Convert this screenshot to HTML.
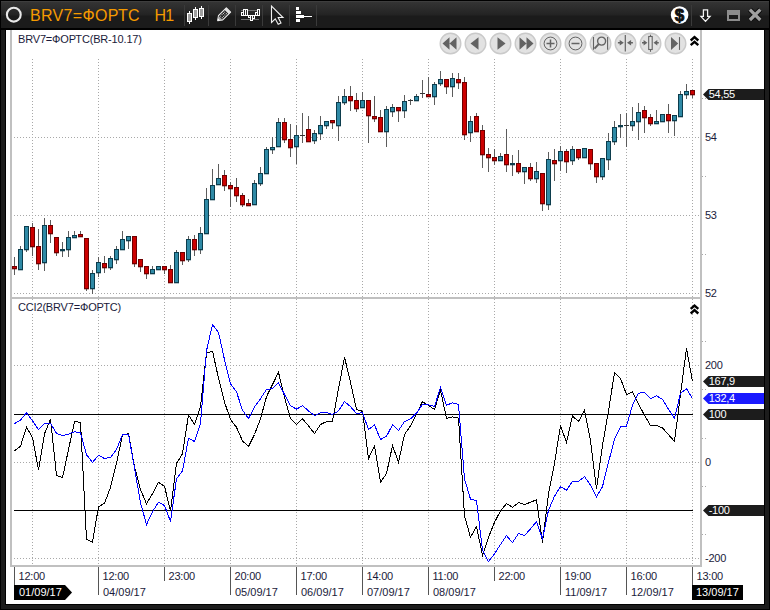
<!DOCTYPE html>
<html lang="ru"><head><meta charset="utf-8"><title>BRV7=ФОРТС H1</title>
<style>
html,body{margin:0;padding:0;background:#1c1c1c;}
body{width:770px;height:610px;position:relative;overflow:hidden;font-family:"Liberation Sans", Arial, sans-serif;}
#win{position:absolute;left:0;top:0;width:770px;height:610px;background:#1c1c1c;box-sizing:border-box;border:1px solid #000;}
#title{position:absolute;left:0;top:0;width:770px;height:30px;background:linear-gradient(to bottom,#000 0,#000 1px,#3e3e3e 1px,#3e3e3e 2px,#343434 2px,#232323 15px,#1b1b1b 16px,#1b1b1b 28.5px,#000 28.5px,#000 30px);}
#title .t{position:absolute;top:3.9px;height:24px;line-height:24px;color:#f59a00;font-size:16px;letter-spacing:0.32px;white-space:nowrap;}
#paper{position:absolute;left:5px;top:29px;width:758px;height:574px;background:#fff;border:1px solid #000;}
.l{position:absolute;white-space:nowrap;line-height:13px;height:13px;font-size:11px;}
</style></head><body>
<div id="win"></div>
<div id="paper"></div>
<div id="title"><div class="t" style="left:30px">BRV7=ФОРТС</div><div class="t" style="left:154.6px;letter-spacing:-1px">H1</div>
<svg width="770" height="30" viewBox="0 0 770 30" style="position:absolute;left:0;top:0">
<rect x="0" y="0" width="1" height="30" fill="#000"/><rect x="769" y="0" width="1" height="30" fill="#000"/>
<circle cx="13.8" cy="14.7" r="6.9" fill="none" stroke="#e8e8e8" stroke-width="2.1"/>
<g shape-rendering="crispEdges" fill="#3a3a3a">
<rect x="184" y="5" width="1" height="21"/>
<rect x="208" y="5" width="1" height="21"/>
<rect x="235" y="5" width="1" height="21"/>
<rect x="262" y="5" width="1" height="21"/>
<rect x="289" y="5" width="1" height="21"/>
<rect x="316" y="5" width="1" height="21"/>
<rect x="691" y="5" width="1" height="21"/>
</g>
<g shape-rendering="crispEdges">
<rect x="189" y="11" width="1" height="13" fill="#fff"/>
<rect x="187" y="13" width="5" height="9" fill="#fff"/>
<rect x="188" y="14" width="3" height="7" fill="#a0a0a0"/>
<rect x="195" y="7" width="1" height="13" fill="#fff"/>
<rect x="193" y="9" width="5" height="9" fill="#fff"/>
<rect x="194" y="10" width="3" height="7" fill="#a0a0a0"/>
<rect x="201" y="6" width="1" height="13" fill="#fff"/>
<rect x="199" y="8" width="5" height="9" fill="#fff"/>
<rect x="200" y="9" width="3" height="7" fill="#a0a0a0"/>
</g>
<g transform="translate(223.8,14.6) rotate(-45)"><path d="M-8.6 0 L-4.5 -3 H6.6 V3 H-4.5 Z" fill="#1c1c1c" stroke="#f2f2f2" stroke-width="1.1" stroke-linejoin="round"/><path d="M-8.6 0 L-4.5 -3 V3 Z" fill="#a8a8a8"/><path d="M-8.8 0 L-6.8 -1.5 V1.5 Z" fill="#fff"/><path d="M-3.8 -1.1 H3.6 M-3.8 1.1 H3.6" stroke="#f4f4f4" stroke-width="1" stroke-dasharray="1 0.9"/><rect x="3.8" y="-3" width="2.8" height="6" fill="#e2e2e2"/></g>
<g shape-rendering="crispEdges">
<rect x="241" y="10" width="18" height="1" fill="#707070"/>
<rect x="241" y="19" width="18" height="1" fill="#707070"/>
<rect x="241" y="15" width="18" height="1" fill="#fff"/>
<rect x="241" y="12" width="3" height="4" fill="#fff"/>
<rect x="243" y="9" width="3" height="7" fill="#fff"/>
<rect x="245" y="9" width="3" height="7" fill="#fff"/>
<rect x="248" y="15" width="3" height="3" fill="#fff"/>
<rect x="250" y="15" width="3" height="6" fill="#fff"/>
<rect x="252" y="15" width="3" height="4" fill="#fff"/>
<rect x="255" y="12" width="3" height="4" fill="#fff"/>
<rect x="257" y="9" width="3" height="7" fill="#fff"/>
<rect x="242" y="13" width="1" height="2" fill="#2a2a2a"/>
<rect x="244" y="10" width="1" height="5" fill="#2a2a2a"/>
<rect x="246" y="10" width="1" height="5" fill="#2a2a2a"/>
<rect x="249" y="16" width="1" height="1" fill="#2a2a2a"/>
<rect x="251" y="16" width="1" height="4" fill="#2a2a2a"/>
<rect x="253" y="16" width="1" height="2" fill="#2a2a2a"/>
<rect x="256" y="13" width="1" height="2" fill="#2a2a2a"/>
<rect x="258" y="10" width="1" height="5" fill="#2a2a2a"/>
</g>
<path d="M271.5 6 V22.5 L275.3 18.8 L278.2 24.3 L281 23 L278.2 17.5 H283 Z" fill="#1c1c1c" stroke="#f0f0f0" stroke-width="1.1" stroke-linejoin="miter"/>
<g shape-rendering="crispEdges" fill="#fff">
<rect x="296" y="7" width="3" height="3"/><rect x="296" y="11" width="5" height="3"/><rect x="296" y="15" width="8" height="3"/><rect x="304" y="16" width="8" height="1"/><rect x="296" y="19" width="4" height="3"/>
</g>
<circle cx="679.6" cy="15" r="8.8" fill="#fff"/>
<text x="679.6" y="21.2" text-anchor="middle" font-family='"Liberation Sans", Arial, sans-serif' font-weight="bold" font-size="17" fill="#111" stroke="#111" stroke-width="0.9" stroke-linejoin="round">$</text>
<path d="M703.4 9.8 H707.6 V16.3 H710.1 L705.5 21.3 L700.9 16.3 H703.4 Z" fill="none" stroke="#f4f4f4" stroke-width="1.25" stroke-linejoin="miter"/>
<g shape-rendering="crispEdges"><rect x="727" y="10" width="13" height="11" fill="#8c8c8c"/><rect x="729" y="15" width="9" height="4" fill="#1c1c1c"/></g>
<path d="M749.9 9.7 L760.3 20 M760.3 9.7 L749.9 20" stroke="#0c0c0c" stroke-width="5.2" stroke-linecap="butt"/>
<path d="M749.9 9.7 L760.3 20 M760.3 9.7 L749.9 20" stroke="#a0a0a0" stroke-width="3.3" stroke-linecap="butt"/>
</svg>
</div>
<svg id="chart" width="770" height="610" viewBox="0 0 770 610" style="position:absolute;left:0;top:0">
<g shape-rendering="crispEdges" stroke="#a8a8a8" stroke-width="1" stroke-dasharray="1 2" fill="none">
<line x1="32.5" y1="59" x2="32.5" y2="566"/>
<line x1="98.5" y1="59" x2="98.5" y2="566"/>
<line x1="164.5" y1="59" x2="164.5" y2="566"/>
<line x1="230.5" y1="59" x2="230.5" y2="566"/>
<line x1="296.5" y1="59" x2="296.5" y2="566"/>
<line x1="362.5" y1="59" x2="362.5" y2="566"/>
<line x1="428.5" y1="59" x2="428.5" y2="566"/>
<line x1="494.5" y1="59" x2="494.5" y2="566"/>
<line x1="560.5" y1="59" x2="560.5" y2="566"/>
<line x1="626.5" y1="59" x2="626.5" y2="566"/>
<line x1="692.5" y1="59" x2="692.5" y2="566"/>
<line x1="14" y1="137.5" x2="700" y2="137.5"/>
<line x1="14" y1="215.5" x2="700" y2="215.5"/>
<line x1="14" y1="293.5" x2="700" y2="293.5"/>
<line x1="14" y1="365.5" x2="700" y2="365.5"/>
<line x1="14" y1="462.5" x2="700" y2="462.5"/>
<line x1="14" y1="558.5" x2="700" y2="558.5"/>
</g>
<g shape-rendering="crispEdges" fill="#a8a8a8">
<rect x="702" y="98" width="1" height="1"/><rect x="705" y="98" width="1" height="1"/>
<rect x="702" y="176" width="1" height="1"/><rect x="705" y="176" width="1" height="1"/>
<rect x="702" y="254" width="1" height="1"/><rect x="705" y="254" width="1" height="1"/>
<rect x="702" y="341" width="1" height="1"/><rect x="705" y="341" width="1" height="1"/>
<rect x="702" y="389" width="1" height="1"/><rect x="705" y="389" width="1" height="1"/>
<rect x="702" y="438" width="1" height="1"/><rect x="705" y="438" width="1" height="1"/>
<rect x="702" y="486" width="1" height="1"/><rect x="705" y="486" width="1" height="1"/>
<rect x="702" y="534" width="1" height="1"/><rect x="705" y="534" width="1" height="1"/>
</g>
<g shape-rendering="crispEdges" fill="#c0c0c0">
<rect x="10" y="30" width="2" height="537"/>
<rect x="700" y="30" width="2" height="537"/>
<rect x="10" y="297" width="692" height="2"/>
<rect x="10" y="565" width="692" height="2"/>
</g>
<g shape-rendering="crispEdges" fill="#000">
<rect x="14" y="414" width="679" height="1"/>
<rect x="14" y="510" width="679" height="1"/>
</g>
<g shape-rendering="crispEdges">
<rect x="14" y="257" width="1" height="18" fill="#5c5c5c"/>
<rect x="12" y="266" width="5" height="3" fill="#6e0000"/>
<rect x="13" y="267" width="3" height="1" fill="#cc0000"/>
<rect x="12" y="269" width="5" height="1" fill="#6e0000" opacity="0.3"/>
<rect x="20" y="246" width="1" height="24" fill="#5c5c5c"/>
<rect x="18" y="249" width="5" height="21" fill="#0c3c4c"/>
<rect x="19" y="250" width="3" height="19" fill="#2f8aa6"/>
<rect x="18" y="270" width="5" height="1" fill="#0c3c4c" opacity="0.3"/>
<rect x="26" y="226" width="1" height="26" fill="#5c5c5c"/>
<rect x="24" y="226" width="5" height="24" fill="#0c3c4c"/>
<rect x="25" y="227" width="3" height="22" fill="#2f8aa6"/>
<rect x="24" y="250" width="5" height="1" fill="#0c3c4c" opacity="0.3"/>
<rect x="32" y="223" width="1" height="33" fill="#5c5c5c"/>
<rect x="30" y="227" width="5" height="20" fill="#6e0000"/>
<rect x="31" y="228" width="3" height="18" fill="#cc0000"/>
<rect x="30" y="247" width="5" height="1" fill="#6e0000" opacity="0.3"/>
<rect x="38" y="229" width="1" height="41" fill="#5c5c5c"/>
<rect x="36" y="246" width="5" height="18" fill="#6e0000"/>
<rect x="37" y="247" width="3" height="16" fill="#cc0000"/>
<rect x="36" y="264" width="5" height="1" fill="#6e0000" opacity="0.3"/>
<rect x="44" y="218" width="1" height="53" fill="#5c5c5c"/>
<rect x="42" y="225" width="5" height="38" fill="#0c3c4c"/>
<rect x="43" y="226" width="3" height="36" fill="#2f8aa6"/>
<rect x="42" y="263" width="5" height="1" fill="#0c3c4c" opacity="0.3"/>
<rect x="50" y="220" width="1" height="23" fill="#5c5c5c"/>
<rect x="48" y="225" width="5" height="9" fill="#6e0000"/>
<rect x="49" y="226" width="3" height="7" fill="#cc0000"/>
<rect x="48" y="234" width="5" height="1" fill="#6e0000" opacity="0.3"/>
<rect x="56" y="237" width="1" height="19" fill="#5c5c5c"/>
<rect x="54" y="237" width="5" height="16" fill="#6e0000"/>
<rect x="55" y="238" width="3" height="14" fill="#cc0000"/>
<rect x="54" y="253" width="5" height="1" fill="#6e0000" opacity="0.3"/>
<rect x="62" y="242" width="1" height="15" fill="#5c5c5c"/>
<rect x="60" y="249" width="5" height="2" fill="#0c3c4c"/>
<rect x="60" y="251" width="5" height="1" fill="#0c3c4c" opacity="0.3"/>
<rect x="68" y="231" width="1" height="26" fill="#5c5c5c"/>
<rect x="66" y="237" width="5" height="13" fill="#0c3c4c"/>
<rect x="67" y="238" width="3" height="11" fill="#2f8aa6"/>
<rect x="66" y="250" width="5" height="1" fill="#0c3c4c" opacity="0.3"/>
<rect x="74" y="231" width="1" height="7" fill="#5c5c5c"/>
<rect x="72" y="235" width="5" height="3" fill="#0c3c4c"/>
<rect x="73" y="236" width="3" height="1" fill="#2f8aa6"/>
<rect x="72" y="238" width="5" height="1" fill="#0c3c4c" opacity="0.3"/>
<rect x="80" y="231" width="1" height="6" fill="#5c5c5c"/>
<rect x="78" y="234" width="5" height="3" fill="#6e0000"/>
<rect x="79" y="235" width="3" height="1" fill="#cc0000"/>
<rect x="78" y="237" width="5" height="1" fill="#6e0000" opacity="0.3"/>
<rect x="86" y="238" width="1" height="53" fill="#5c5c5c"/>
<rect x="84" y="238" width="5" height="51" fill="#6e0000"/>
<rect x="85" y="239" width="3" height="49" fill="#cc0000"/>
<rect x="84" y="289" width="5" height="1" fill="#6e0000" opacity="0.3"/>
<rect x="92" y="270" width="1" height="24" fill="#5c5c5c"/>
<rect x="90" y="273" width="5" height="16" fill="#0c3c4c"/>
<rect x="91" y="274" width="3" height="14" fill="#2f8aa6"/>
<rect x="90" y="289" width="5" height="1" fill="#0c3c4c" opacity="0.3"/>
<rect x="98" y="257" width="1" height="20" fill="#5c5c5c"/>
<rect x="96" y="262" width="5" height="11" fill="#0c3c4c"/>
<rect x="97" y="263" width="3" height="9" fill="#2f8aa6"/>
<rect x="96" y="273" width="5" height="1" fill="#0c3c4c" opacity="0.3"/>
<rect x="104" y="256" width="1" height="17" fill="#5c5c5c"/>
<rect x="102" y="263" width="5" height="5" fill="#6e0000"/>
<rect x="103" y="264" width="3" height="3" fill="#cc0000"/>
<rect x="102" y="268" width="5" height="1" fill="#6e0000" opacity="0.3"/>
<rect x="110" y="256" width="1" height="14" fill="#5c5c5c"/>
<rect x="108" y="258" width="5" height="10" fill="#0c3c4c"/>
<rect x="109" y="259" width="3" height="8" fill="#2f8aa6"/>
<rect x="108" y="268" width="5" height="1" fill="#0c3c4c" opacity="0.3"/>
<rect x="116" y="246" width="1" height="18" fill="#5c5c5c"/>
<rect x="114" y="249" width="5" height="11" fill="#0c3c4c"/>
<rect x="115" y="250" width="3" height="9" fill="#2f8aa6"/>
<rect x="114" y="260" width="5" height="1" fill="#0c3c4c" opacity="0.3"/>
<rect x="122" y="231" width="1" height="19" fill="#5c5c5c"/>
<rect x="120" y="239" width="5" height="11" fill="#0c3c4c"/>
<rect x="121" y="240" width="3" height="9" fill="#2f8aa6"/>
<rect x="120" y="250" width="5" height="1" fill="#0c3c4c" opacity="0.3"/>
<rect x="128" y="236" width="1" height="13" fill="#5c5c5c"/>
<rect x="126" y="236" width="5" height="5" fill="#0c3c4c"/>
<rect x="127" y="237" width="3" height="3" fill="#2f8aa6"/>
<rect x="126" y="241" width="5" height="1" fill="#0c3c4c" opacity="0.3"/>
<rect x="134" y="236" width="1" height="31" fill="#5c5c5c"/>
<rect x="132" y="236" width="5" height="28" fill="#6e0000"/>
<rect x="133" y="237" width="3" height="26" fill="#cc0000"/>
<rect x="132" y="264" width="5" height="1" fill="#6e0000" opacity="0.3"/>
<rect x="140" y="259" width="1" height="13" fill="#5c5c5c"/>
<rect x="138" y="259" width="5" height="8" fill="#6e0000"/>
<rect x="139" y="260" width="3" height="6" fill="#cc0000"/>
<rect x="138" y="267" width="5" height="1" fill="#6e0000" opacity="0.3"/>
<rect x="146" y="266" width="1" height="13" fill="#5c5c5c"/>
<rect x="144" y="266" width="5" height="8" fill="#6e0000"/>
<rect x="145" y="267" width="3" height="6" fill="#cc0000"/>
<rect x="144" y="274" width="5" height="1" fill="#6e0000" opacity="0.3"/>
<rect x="152" y="266" width="1" height="8" fill="#5c5c5c"/>
<rect x="150" y="269" width="5" height="5" fill="#0c3c4c"/>
<rect x="151" y="270" width="3" height="3" fill="#2f8aa6"/>
<rect x="150" y="274" width="5" height="1" fill="#0c3c4c" opacity="0.3"/>
<rect x="158" y="266" width="1" height="4" fill="#5c5c5c"/>
<rect x="156" y="266" width="5" height="4" fill="#0c3c4c"/>
<rect x="157" y="267" width="3" height="2" fill="#2f8aa6"/>
<rect x="156" y="270" width="5" height="1" fill="#0c3c4c" opacity="0.3"/>
<rect x="164" y="266" width="1" height="8" fill="#5c5c5c"/>
<rect x="162" y="266" width="5" height="4" fill="#6e0000"/>
<rect x="163" y="267" width="3" height="2" fill="#cc0000"/>
<rect x="162" y="270" width="5" height="1" fill="#6e0000" opacity="0.3"/>
<rect x="170" y="265" width="1" height="18" fill="#5c5c5c"/>
<rect x="168" y="269" width="5" height="14" fill="#6e0000"/>
<rect x="169" y="270" width="3" height="12" fill="#cc0000"/>
<rect x="168" y="283" width="5" height="1" fill="#6e0000" opacity="0.3"/>
<rect x="176" y="250" width="1" height="33" fill="#5c5c5c"/>
<rect x="174" y="252" width="5" height="31" fill="#0c3c4c"/>
<rect x="175" y="253" width="3" height="29" fill="#2f8aa6"/>
<rect x="174" y="283" width="5" height="1" fill="#0c3c4c" opacity="0.3"/>
<rect x="182" y="252" width="1" height="13" fill="#5c5c5c"/>
<rect x="180" y="252" width="5" height="9" fill="#6e0000"/>
<rect x="181" y="253" width="3" height="7" fill="#cc0000"/>
<rect x="180" y="261" width="5" height="1" fill="#6e0000" opacity="0.3"/>
<rect x="188" y="236" width="1" height="26" fill="#5c5c5c"/>
<rect x="186" y="239" width="5" height="21" fill="#0c3c4c"/>
<rect x="187" y="240" width="3" height="19" fill="#2f8aa6"/>
<rect x="186" y="260" width="5" height="1" fill="#0c3c4c" opacity="0.3"/>
<rect x="194" y="235" width="1" height="21" fill="#5c5c5c"/>
<rect x="192" y="239" width="5" height="11" fill="#6e0000"/>
<rect x="193" y="240" width="3" height="9" fill="#cc0000"/>
<rect x="192" y="250" width="5" height="1" fill="#6e0000" opacity="0.3"/>
<rect x="200" y="227" width="1" height="27" fill="#5c5c5c"/>
<rect x="198" y="233" width="5" height="17" fill="#0c3c4c"/>
<rect x="199" y="234" width="3" height="15" fill="#2f8aa6"/>
<rect x="198" y="250" width="5" height="1" fill="#0c3c4c" opacity="0.3"/>
<rect x="206" y="188" width="1" height="46" fill="#5c5c5c"/>
<rect x="204" y="199" width="5" height="35" fill="#0c3c4c"/>
<rect x="205" y="200" width="3" height="33" fill="#2f8aa6"/>
<rect x="204" y="234" width="5" height="1" fill="#0c3c4c" opacity="0.3"/>
<rect x="212" y="169" width="1" height="31" fill="#5c5c5c"/>
<rect x="210" y="185" width="5" height="15" fill="#0c3c4c"/>
<rect x="211" y="186" width="3" height="13" fill="#2f8aa6"/>
<rect x="210" y="200" width="5" height="1" fill="#0c3c4c" opacity="0.3"/>
<rect x="218" y="164" width="1" height="21" fill="#5c5c5c"/>
<rect x="216" y="178" width="5" height="7" fill="#0c3c4c"/>
<rect x="217" y="179" width="3" height="5" fill="#2f8aa6"/>
<rect x="216" y="185" width="5" height="1" fill="#0c3c4c" opacity="0.3"/>
<rect x="224" y="170" width="1" height="21" fill="#5c5c5c"/>
<rect x="222" y="175" width="5" height="11" fill="#6e0000"/>
<rect x="223" y="176" width="3" height="9" fill="#cc0000"/>
<rect x="222" y="186" width="5" height="1" fill="#6e0000" opacity="0.3"/>
<rect x="230" y="182" width="1" height="25" fill="#5c5c5c"/>
<rect x="228" y="185" width="5" height="4" fill="#6e0000"/>
<rect x="229" y="186" width="3" height="2" fill="#cc0000"/>
<rect x="228" y="189" width="5" height="1" fill="#6e0000" opacity="0.3"/>
<rect x="236" y="178" width="1" height="24" fill="#5c5c5c"/>
<rect x="234" y="187" width="5" height="9" fill="#6e0000"/>
<rect x="235" y="188" width="3" height="7" fill="#cc0000"/>
<rect x="234" y="196" width="5" height="1" fill="#6e0000" opacity="0.3"/>
<rect x="242" y="193" width="1" height="14" fill="#5c5c5c"/>
<rect x="240" y="195" width="5" height="10" fill="#6e0000"/>
<rect x="241" y="196" width="3" height="8" fill="#cc0000"/>
<rect x="240" y="205" width="5" height="1" fill="#6e0000" opacity="0.3"/>
<rect x="248" y="199" width="1" height="7" fill="#5c5c5c"/>
<rect x="246" y="203" width="5" height="3" fill="#6e0000"/>
<rect x="247" y="204" width="3" height="1" fill="#cc0000"/>
<rect x="246" y="206" width="5" height="1" fill="#6e0000" opacity="0.3"/>
<rect x="254" y="180" width="1" height="25" fill="#5c5c5c"/>
<rect x="252" y="183" width="5" height="22" fill="#0c3c4c"/>
<rect x="253" y="184" width="3" height="20" fill="#2f8aa6"/>
<rect x="252" y="205" width="5" height="1" fill="#0c3c4c" opacity="0.3"/>
<rect x="260" y="167" width="1" height="19" fill="#5c5c5c"/>
<rect x="258" y="173" width="5" height="11" fill="#0c3c4c"/>
<rect x="259" y="174" width="3" height="9" fill="#2f8aa6"/>
<rect x="258" y="184" width="5" height="1" fill="#0c3c4c" opacity="0.3"/>
<rect x="266" y="147" width="1" height="27" fill="#5c5c5c"/>
<rect x="264" y="149" width="5" height="25" fill="#0c3c4c"/>
<rect x="265" y="150" width="3" height="23" fill="#2f8aa6"/>
<rect x="264" y="174" width="5" height="1" fill="#0c3c4c" opacity="0.3"/>
<rect x="272" y="137" width="1" height="17" fill="#5c5c5c"/>
<rect x="270" y="147" width="5" height="3" fill="#0c3c4c"/>
<rect x="271" y="148" width="3" height="1" fill="#2f8aa6"/>
<rect x="270" y="150" width="5" height="1" fill="#0c3c4c" opacity="0.3"/>
<rect x="278" y="118" width="1" height="29" fill="#5c5c5c"/>
<rect x="276" y="122" width="5" height="25" fill="#0c3c4c"/>
<rect x="277" y="123" width="3" height="23" fill="#2f8aa6"/>
<rect x="276" y="147" width="5" height="1" fill="#0c3c4c" opacity="0.3"/>
<rect x="284" y="118" width="1" height="25" fill="#5c5c5c"/>
<rect x="282" y="122" width="5" height="18" fill="#6e0000"/>
<rect x="283" y="123" width="3" height="16" fill="#cc0000"/>
<rect x="282" y="140" width="5" height="1" fill="#6e0000" opacity="0.3"/>
<rect x="290" y="124" width="1" height="33" fill="#5c5c5c"/>
<rect x="288" y="139" width="5" height="9" fill="#6e0000"/>
<rect x="289" y="140" width="3" height="7" fill="#cc0000"/>
<rect x="288" y="148" width="5" height="1" fill="#6e0000" opacity="0.3"/>
<rect x="296" y="125" width="1" height="39" fill="#5c5c5c"/>
<rect x="294" y="135" width="5" height="12" fill="#0c3c4c"/>
<rect x="295" y="136" width="3" height="10" fill="#2f8aa6"/>
<rect x="294" y="147" width="5" height="1" fill="#0c3c4c" opacity="0.3"/>
<rect x="302" y="113" width="1" height="30" fill="#5c5c5c"/>
<rect x="300" y="135" width="5" height="1" fill="#333"/>
<rect x="308" y="116" width="1" height="26" fill="#5c5c5c"/>
<rect x="306" y="129" width="5" height="13" fill="#6e0000"/>
<rect x="307" y="130" width="3" height="11" fill="#cc0000"/>
<rect x="306" y="142" width="5" height="1" fill="#6e0000" opacity="0.3"/>
<rect x="314" y="130" width="1" height="14" fill="#5c5c5c"/>
<rect x="312" y="133" width="5" height="8" fill="#0c3c4c"/>
<rect x="313" y="134" width="3" height="6" fill="#2f8aa6"/>
<rect x="312" y="141" width="5" height="1" fill="#0c3c4c" opacity="0.3"/>
<rect x="320" y="116" width="1" height="24" fill="#5c5c5c"/>
<rect x="318" y="125" width="5" height="9" fill="#0c3c4c"/>
<rect x="319" y="126" width="3" height="7" fill="#2f8aa6"/>
<rect x="318" y="134" width="5" height="1" fill="#0c3c4c" opacity="0.3"/>
<rect x="326" y="121" width="1" height="8" fill="#5c5c5c"/>
<rect x="324" y="121" width="5" height="5" fill="#0c3c4c"/>
<rect x="325" y="122" width="3" height="3" fill="#2f8aa6"/>
<rect x="324" y="126" width="5" height="1" fill="#0c3c4c" opacity="0.3"/>
<rect x="332" y="120" width="1" height="9" fill="#5c5c5c"/>
<rect x="330" y="120" width="5" height="3" fill="#6e0000"/>
<rect x="331" y="121" width="3" height="1" fill="#cc0000"/>
<rect x="330" y="123" width="5" height="1" fill="#6e0000" opacity="0.3"/>
<rect x="338" y="96" width="1" height="45" fill="#5c5c5c"/>
<rect x="336" y="102" width="5" height="24" fill="#0c3c4c"/>
<rect x="337" y="103" width="3" height="22" fill="#2f8aa6"/>
<rect x="336" y="126" width="5" height="1" fill="#0c3c4c" opacity="0.3"/>
<rect x="344" y="89" width="1" height="16" fill="#5c5c5c"/>
<rect x="342" y="96" width="5" height="7" fill="#0c3c4c"/>
<rect x="343" y="97" width="3" height="5" fill="#2f8aa6"/>
<rect x="342" y="103" width="5" height="1" fill="#0c3c4c" opacity="0.3"/>
<rect x="350" y="86" width="1" height="25" fill="#5c5c5c"/>
<rect x="348" y="96" width="5" height="5" fill="#6e0000"/>
<rect x="349" y="97" width="3" height="3" fill="#cc0000"/>
<rect x="348" y="101" width="5" height="1" fill="#6e0000" opacity="0.3"/>
<rect x="356" y="93" width="1" height="19" fill="#5c5c5c"/>
<rect x="354" y="100" width="5" height="9" fill="#6e0000"/>
<rect x="355" y="101" width="3" height="7" fill="#cc0000"/>
<rect x="354" y="109" width="5" height="1" fill="#6e0000" opacity="0.3"/>
<rect x="362" y="92" width="1" height="16" fill="#5c5c5c"/>
<rect x="360" y="100" width="5" height="8" fill="#0c3c4c"/>
<rect x="361" y="101" width="3" height="6" fill="#2f8aa6"/>
<rect x="360" y="108" width="5" height="1" fill="#0c3c4c" opacity="0.3"/>
<rect x="368" y="100" width="1" height="43" fill="#5c5c5c"/>
<rect x="366" y="100" width="5" height="16" fill="#6e0000"/>
<rect x="367" y="101" width="3" height="14" fill="#cc0000"/>
<rect x="366" y="116" width="5" height="1" fill="#6e0000" opacity="0.3"/>
<rect x="374" y="96" width="1" height="26" fill="#5c5c5c"/>
<rect x="372" y="116" width="5" height="3" fill="#6e0000"/>
<rect x="373" y="117" width="3" height="1" fill="#cc0000"/>
<rect x="372" y="119" width="5" height="1" fill="#6e0000" opacity="0.3"/>
<rect x="380" y="110" width="1" height="22" fill="#5c5c5c"/>
<rect x="378" y="117" width="5" height="15" fill="#6e0000"/>
<rect x="379" y="118" width="3" height="13" fill="#cc0000"/>
<rect x="378" y="132" width="5" height="1" fill="#6e0000" opacity="0.3"/>
<rect x="386" y="106" width="1" height="41" fill="#5c5c5c"/>
<rect x="384" y="109" width="5" height="23" fill="#0c3c4c"/>
<rect x="385" y="110" width="3" height="21" fill="#2f8aa6"/>
<rect x="384" y="132" width="5" height="1" fill="#0c3c4c" opacity="0.3"/>
<rect x="392" y="104" width="1" height="13" fill="#5c5c5c"/>
<rect x="390" y="107" width="5" height="5" fill="#0c3c4c"/>
<rect x="391" y="108" width="3" height="3" fill="#2f8aa6"/>
<rect x="390" y="112" width="5" height="1" fill="#0c3c4c" opacity="0.3"/>
<rect x="398" y="107" width="1" height="15" fill="#5c5c5c"/>
<rect x="396" y="107" width="5" height="4" fill="#6e0000"/>
<rect x="397" y="108" width="3" height="2" fill="#cc0000"/>
<rect x="396" y="111" width="5" height="1" fill="#6e0000" opacity="0.3"/>
<rect x="404" y="95" width="1" height="23" fill="#5c5c5c"/>
<rect x="402" y="101" width="5" height="10" fill="#0c3c4c"/>
<rect x="403" y="102" width="3" height="8" fill="#2f8aa6"/>
<rect x="402" y="111" width="5" height="1" fill="#0c3c4c" opacity="0.3"/>
<rect x="410" y="99" width="1" height="6" fill="#5c5c5c"/>
<rect x="408" y="100" width="5" height="1" fill="#333"/>
<rect x="416" y="94" width="1" height="7" fill="#5c5c5c"/>
<rect x="414" y="96" width="5" height="5" fill="#0c3c4c"/>
<rect x="415" y="97" width="3" height="3" fill="#2f8aa6"/>
<rect x="414" y="101" width="5" height="1" fill="#0c3c4c" opacity="0.3"/>
<rect x="422" y="80" width="1" height="18" fill="#5c5c5c"/>
<rect x="420" y="93" width="5" height="1" fill="#333"/>
<rect x="428" y="77" width="1" height="20" fill="#5c5c5c"/>
<rect x="426" y="94" width="5" height="3" fill="#6e0000"/>
<rect x="427" y="95" width="3" height="1" fill="#cc0000"/>
<rect x="426" y="97" width="5" height="1" fill="#6e0000" opacity="0.3"/>
<rect x="434" y="82" width="1" height="23" fill="#5c5c5c"/>
<rect x="432" y="84" width="5" height="13" fill="#0c3c4c"/>
<rect x="433" y="85" width="3" height="11" fill="#2f8aa6"/>
<rect x="432" y="97" width="5" height="1" fill="#0c3c4c" opacity="0.3"/>
<rect x="440" y="71" width="1" height="15" fill="#5c5c5c"/>
<rect x="438" y="79" width="5" height="5" fill="#0c3c4c"/>
<rect x="439" y="80" width="3" height="3" fill="#2f8aa6"/>
<rect x="438" y="84" width="5" height="1" fill="#0c3c4c" opacity="0.3"/>
<rect x="446" y="79" width="1" height="15" fill="#5c5c5c"/>
<rect x="444" y="79" width="5" height="8" fill="#6e0000"/>
<rect x="445" y="80" width="3" height="6" fill="#cc0000"/>
<rect x="444" y="87" width="5" height="1" fill="#6e0000" opacity="0.3"/>
<rect x="452" y="73" width="1" height="24" fill="#5c5c5c"/>
<rect x="450" y="78" width="5" height="9" fill="#0c3c4c"/>
<rect x="451" y="79" width="3" height="7" fill="#2f8aa6"/>
<rect x="450" y="87" width="5" height="1" fill="#0c3c4c" opacity="0.3"/>
<rect x="458" y="73" width="1" height="16" fill="#5c5c5c"/>
<rect x="456" y="79" width="5" height="4" fill="#6e0000"/>
<rect x="457" y="80" width="3" height="2" fill="#cc0000"/>
<rect x="456" y="83" width="5" height="1" fill="#6e0000" opacity="0.3"/>
<rect x="464" y="77" width="1" height="63" fill="#5c5c5c"/>
<rect x="462" y="82" width="5" height="53" fill="#6e0000"/>
<rect x="463" y="83" width="3" height="51" fill="#cc0000"/>
<rect x="462" y="135" width="5" height="1" fill="#6e0000" opacity="0.3"/>
<rect x="470" y="116" width="1" height="26" fill="#5c5c5c"/>
<rect x="468" y="121" width="5" height="12" fill="#0c3c4c"/>
<rect x="469" y="122" width="3" height="10" fill="#2f8aa6"/>
<rect x="468" y="133" width="5" height="1" fill="#0c3c4c" opacity="0.3"/>
<rect x="476" y="113" width="1" height="19" fill="#5c5c5c"/>
<rect x="474" y="116" width="5" height="16" fill="#6e0000"/>
<rect x="475" y="117" width="3" height="14" fill="#cc0000"/>
<rect x="474" y="132" width="5" height="1" fill="#6e0000" opacity="0.3"/>
<rect x="482" y="125" width="1" height="43" fill="#5c5c5c"/>
<rect x="480" y="130" width="5" height="25" fill="#6e0000"/>
<rect x="481" y="131" width="3" height="23" fill="#cc0000"/>
<rect x="480" y="155" width="5" height="1" fill="#6e0000" opacity="0.3"/>
<rect x="488" y="148" width="1" height="24" fill="#5c5c5c"/>
<rect x="486" y="154" width="5" height="4" fill="#6e0000"/>
<rect x="487" y="155" width="3" height="2" fill="#cc0000"/>
<rect x="486" y="158" width="5" height="1" fill="#6e0000" opacity="0.3"/>
<rect x="494" y="149" width="1" height="16" fill="#5c5c5c"/>
<rect x="492" y="157" width="5" height="4" fill="#6e0000"/>
<rect x="493" y="158" width="3" height="2" fill="#cc0000"/>
<rect x="492" y="161" width="5" height="1" fill="#6e0000" opacity="0.3"/>
<rect x="500" y="153" width="1" height="8" fill="#5c5c5c"/>
<rect x="498" y="156" width="5" height="5" fill="#0c3c4c"/>
<rect x="499" y="157" width="3" height="3" fill="#2f8aa6"/>
<rect x="498" y="161" width="5" height="1" fill="#0c3c4c" opacity="0.3"/>
<rect x="506" y="129" width="1" height="43" fill="#5c5c5c"/>
<rect x="504" y="154" width="5" height="11" fill="#6e0000"/>
<rect x="505" y="155" width="3" height="9" fill="#cc0000"/>
<rect x="504" y="165" width="5" height="1" fill="#6e0000" opacity="0.3"/>
<rect x="512" y="155" width="1" height="21" fill="#5c5c5c"/>
<rect x="510" y="163" width="5" height="2" fill="#0c3c4c"/>
<rect x="510" y="165" width="5" height="1" fill="#0c3c4c" opacity="0.3"/>
<rect x="518" y="150" width="1" height="24" fill="#5c5c5c"/>
<rect x="516" y="163" width="5" height="9" fill="#6e0000"/>
<rect x="517" y="164" width="3" height="7" fill="#cc0000"/>
<rect x="516" y="172" width="5" height="1" fill="#6e0000" opacity="0.3"/>
<rect x="524" y="167" width="1" height="17" fill="#5c5c5c"/>
<rect x="522" y="167" width="5" height="5" fill="#0c3c4c"/>
<rect x="523" y="168" width="3" height="3" fill="#2f8aa6"/>
<rect x="522" y="172" width="5" height="1" fill="#0c3c4c" opacity="0.3"/>
<rect x="530" y="163" width="1" height="18" fill="#5c5c5c"/>
<rect x="528" y="167" width="5" height="12" fill="#6e0000"/>
<rect x="529" y="168" width="3" height="10" fill="#cc0000"/>
<rect x="528" y="179" width="5" height="1" fill="#6e0000" opacity="0.3"/>
<rect x="536" y="162" width="1" height="21" fill="#5c5c5c"/>
<rect x="534" y="171" width="5" height="8" fill="#0c3c4c"/>
<rect x="535" y="172" width="3" height="6" fill="#2f8aa6"/>
<rect x="534" y="179" width="5" height="1" fill="#0c3c4c" opacity="0.3"/>
<rect x="542" y="173" width="1" height="38" fill="#5c5c5c"/>
<rect x="540" y="173" width="5" height="31" fill="#6e0000"/>
<rect x="541" y="174" width="3" height="29" fill="#cc0000"/>
<rect x="540" y="204" width="5" height="1" fill="#6e0000" opacity="0.3"/>
<rect x="548" y="152" width="1" height="58" fill="#5c5c5c"/>
<rect x="546" y="159" width="5" height="46" fill="#0c3c4c"/>
<rect x="547" y="160" width="3" height="44" fill="#2f8aa6"/>
<rect x="546" y="205" width="5" height="1" fill="#0c3c4c" opacity="0.3"/>
<rect x="554" y="149" width="1" height="32" fill="#5c5c5c"/>
<rect x="552" y="160" width="5" height="4" fill="#6e0000"/>
<rect x="553" y="161" width="3" height="2" fill="#cc0000"/>
<rect x="552" y="164" width="5" height="1" fill="#6e0000" opacity="0.3"/>
<rect x="560" y="146" width="1" height="25" fill="#5c5c5c"/>
<rect x="558" y="151" width="5" height="10" fill="#0c3c4c"/>
<rect x="559" y="152" width="3" height="8" fill="#2f8aa6"/>
<rect x="558" y="161" width="5" height="1" fill="#0c3c4c" opacity="0.3"/>
<rect x="566" y="149" width="1" height="24" fill="#5c5c5c"/>
<rect x="564" y="151" width="5" height="11" fill="#6e0000"/>
<rect x="565" y="152" width="3" height="9" fill="#cc0000"/>
<rect x="564" y="162" width="5" height="1" fill="#6e0000" opacity="0.3"/>
<rect x="572" y="146" width="1" height="19" fill="#5c5c5c"/>
<rect x="570" y="149" width="5" height="12" fill="#0c3c4c"/>
<rect x="571" y="150" width="3" height="10" fill="#2f8aa6"/>
<rect x="570" y="161" width="5" height="1" fill="#0c3c4c" opacity="0.3"/>
<rect x="578" y="149" width="1" height="11" fill="#5c5c5c"/>
<rect x="576" y="149" width="5" height="9" fill="#6e0000"/>
<rect x="577" y="150" width="3" height="7" fill="#cc0000"/>
<rect x="576" y="158" width="5" height="1" fill="#6e0000" opacity="0.3"/>
<rect x="584" y="148" width="1" height="10" fill="#5c5c5c"/>
<rect x="582" y="148" width="5" height="10" fill="#0c3c4c"/>
<rect x="583" y="149" width="3" height="8" fill="#2f8aa6"/>
<rect x="582" y="158" width="5" height="1" fill="#0c3c4c" opacity="0.3"/>
<rect x="590" y="149" width="1" height="21" fill="#5c5c5c"/>
<rect x="588" y="149" width="5" height="15" fill="#6e0000"/>
<rect x="589" y="150" width="3" height="13" fill="#cc0000"/>
<rect x="588" y="164" width="5" height="1" fill="#6e0000" opacity="0.3"/>
<rect x="596" y="163" width="1" height="20" fill="#5c5c5c"/>
<rect x="594" y="163" width="5" height="14" fill="#6e0000"/>
<rect x="595" y="164" width="3" height="12" fill="#cc0000"/>
<rect x="594" y="177" width="5" height="1" fill="#6e0000" opacity="0.3"/>
<rect x="602" y="158" width="1" height="22" fill="#5c5c5c"/>
<rect x="600" y="158" width="5" height="19" fill="#0c3c4c"/>
<rect x="601" y="159" width="3" height="17" fill="#2f8aa6"/>
<rect x="600" y="177" width="5" height="1" fill="#0c3c4c" opacity="0.3"/>
<rect x="608" y="133" width="1" height="37" fill="#5c5c5c"/>
<rect x="606" y="141" width="5" height="19" fill="#0c3c4c"/>
<rect x="607" y="142" width="3" height="17" fill="#2f8aa6"/>
<rect x="606" y="160" width="5" height="1" fill="#0c3c4c" opacity="0.3"/>
<rect x="614" y="121" width="1" height="24" fill="#5c5c5c"/>
<rect x="612" y="127" width="5" height="15" fill="#0c3c4c"/>
<rect x="613" y="128" width="3" height="13" fill="#2f8aa6"/>
<rect x="612" y="142" width="5" height="1" fill="#0c3c4c" opacity="0.3"/>
<rect x="620" y="114" width="1" height="24" fill="#5c5c5c"/>
<rect x="618" y="125" width="5" height="2" fill="#0c3c4c"/>
<rect x="618" y="127" width="5" height="1" fill="#0c3c4c" opacity="0.3"/>
<rect x="626" y="113" width="1" height="34" fill="#5c5c5c"/>
<rect x="624" y="125" width="5" height="1" fill="#333"/>
<rect x="632" y="107" width="1" height="24" fill="#5c5c5c"/>
<rect x="630" y="121" width="5" height="5" fill="#0c3c4c"/>
<rect x="631" y="122" width="3" height="3" fill="#2f8aa6"/>
<rect x="630" y="126" width="5" height="1" fill="#0c3c4c" opacity="0.3"/>
<rect x="638" y="103" width="1" height="37" fill="#5c5c5c"/>
<rect x="636" y="112" width="5" height="10" fill="#0c3c4c"/>
<rect x="637" y="113" width="3" height="8" fill="#2f8aa6"/>
<rect x="636" y="122" width="5" height="1" fill="#0c3c4c" opacity="0.3"/>
<rect x="644" y="106" width="1" height="27" fill="#5c5c5c"/>
<rect x="642" y="110" width="5" height="8" fill="#6e0000"/>
<rect x="643" y="111" width="3" height="6" fill="#cc0000"/>
<rect x="642" y="118" width="5" height="1" fill="#6e0000" opacity="0.3"/>
<rect x="650" y="114" width="1" height="12" fill="#5c5c5c"/>
<rect x="648" y="117" width="5" height="7" fill="#6e0000"/>
<rect x="649" y="118" width="3" height="5" fill="#cc0000"/>
<rect x="648" y="124" width="5" height="1" fill="#6e0000" opacity="0.3"/>
<rect x="656" y="110" width="1" height="14" fill="#5c5c5c"/>
<rect x="654" y="121" width="5" height="3" fill="#0c3c4c"/>
<rect x="655" y="122" width="3" height="1" fill="#2f8aa6"/>
<rect x="654" y="124" width="5" height="1" fill="#0c3c4c" opacity="0.3"/>
<rect x="662" y="114" width="1" height="8" fill="#5c5c5c"/>
<rect x="660" y="114" width="5" height="8" fill="#0c3c4c"/>
<rect x="661" y="115" width="3" height="6" fill="#2f8aa6"/>
<rect x="660" y="122" width="5" height="1" fill="#0c3c4c" opacity="0.3"/>
<rect x="668" y="104" width="1" height="29" fill="#5c5c5c"/>
<rect x="666" y="114" width="5" height="7" fill="#6e0000"/>
<rect x="667" y="115" width="3" height="5" fill="#cc0000"/>
<rect x="666" y="121" width="5" height="1" fill="#6e0000" opacity="0.3"/>
<rect x="674" y="115" width="1" height="21" fill="#5c5c5c"/>
<rect x="672" y="115" width="5" height="6" fill="#0c3c4c"/>
<rect x="673" y="116" width="3" height="4" fill="#2f8aa6"/>
<rect x="672" y="121" width="5" height="1" fill="#0c3c4c" opacity="0.3"/>
<rect x="680" y="91" width="1" height="26" fill="#5c5c5c"/>
<rect x="678" y="94" width="5" height="23" fill="#0c3c4c"/>
<rect x="679" y="95" width="3" height="21" fill="#2f8aa6"/>
<rect x="678" y="117" width="5" height="1" fill="#0c3c4c" opacity="0.3"/>
<rect x="686" y="84" width="1" height="15" fill="#5c5c5c"/>
<rect x="684" y="91" width="5" height="4" fill="#0c3c4c"/>
<rect x="685" y="92" width="3" height="2" fill="#2f8aa6"/>
<rect x="684" y="95" width="5" height="1" fill="#0c3c4c" opacity="0.3"/>
<rect x="692" y="90" width="1" height="8" fill="#5c5c5c"/>
<rect x="690" y="90" width="5" height="5" fill="#6e0000"/>
<rect x="691" y="91" width="3" height="3" fill="#cc0000"/>
<rect x="690" y="95" width="5" height="1" fill="#6e0000" opacity="0.3"/>
</g>
<polyline points="14.5,450.9 20.5,446.2 26.5,427.3 32.5,437.6 38.5,469.8 44.5,433.8 50.5,419.2 56.5,475.2 62.5,477.8 68.5,449.5 74.5,421.7 80.5,422.3 86.5,539.0 92.5,542.3 98.5,506.7 104.5,503.2 110.5,487.5 116.5,463.2 122.5,435.1 128.5,433.6 134.5,466.7 140.5,489.7 146.5,503.8 152.5,493.6 158.5,482.4 164.5,486.2 170.5,511.4 176.5,463.4 182.5,453.8 188.5,414.9 194.5,424.5 200.5,406.7 206.5,353.2 212.5,351.1 218.5,378.2 224.5,402.2 230.5,419.5 236.5,427.3 242.5,440.9 248.5,446.6 254.5,434.5 260.5,418.8 266.5,396.7 272.5,384.5 278.5,372.3 284.5,397.3 290.5,418.5 296.5,424.8 302.5,418.8 308.5,425.9 314.5,433.5 320.5,424.5 326.5,421.6 332.5,421.2 338.5,388.8 344.5,357.3 350.5,382.3 356.5,409.5 362.5,411.3 368.5,458.5 374.5,445.9 380.5,482.3 386.5,473.5 392.5,445.6 398.5,462.3 404.5,434.5 410.5,425.9 416.5,413.8 422.5,401.6 428.5,405.5 434.5,409.4 440.5,390.2 446.5,418.3 452.5,416.8 458.5,418.1 464.5,515.7 470.5,537.3 476.5,526.6 482.5,555.2 488.5,537.3 494.5,522.3 500.5,510.9 506.5,503.5 512.5,507.3 518.5,502.6 524.5,504.5 530.5,502.3 536.5,499.8 542.5,542.6 548.5,493.8 554.5,463.1 560.5,425.6 566.5,442.3 572.5,415.9 578.5,421.6 584.5,410.2 590.5,440.9 596.5,488.8 602.5,445.2 608.5,410.9 614.5,372.8 620.5,378.5 626.5,394.5 632.5,391.9 638.5,403.8 644.5,415.4 650.5,425.5 656.5,425.5 662.5,427.9 668.5,434.7 674.5,441.4 680.5,394.2 686.5,348.5 692.5,381.4" fill="none" stroke="#000" stroke-width="1" stroke-linejoin="miter" shape-rendering="crispEdges"/>
<polyline points="14.5,423.5 20.5,420.2 26.5,412.8 32.5,420.9 38.5,429.8 44.5,423.5 50.5,423.5 56.5,433.3 62.5,435.6 68.5,434.1 74.5,431.7 80.5,432.7 86.5,454.7 92.5,462.4 98.5,455.3 104.5,458.5 110.5,457.4 116.5,449.4 122.5,434.7 128.5,434.3 134.5,468.2 140.5,502.7 146.5,524.6 152.5,511.6 158.5,502.3 164.5,505.5 170.5,521.4 176.5,479.0 182.5,470.9 188.5,438.1 194.5,441.6 200.5,423.1 206.5,350.7 212.5,324.6 218.5,332.5 224.5,359.6 230.5,383.9 236.5,391.8 242.5,410.2 248.5,418.5 254.5,407.0 260.5,398.7 266.5,389.4 272.5,388.8 278.5,382.8 284.5,394.5 290.5,405.6 296.5,409.1 302.5,405.6 308.5,410.9 314.5,415.6 320.5,412.6 326.5,412.6 332.5,414.5 338.5,410.9 344.5,401.6 350.5,406.6 356.5,413.5 362.5,412.6 368.5,429.5 374.5,424.9 380.5,439.5 386.5,436.3 392.5,424.8 398.5,430.6 404.5,421.6 410.5,418.8 416.5,413.1 422.5,404.5 428.5,404.9 434.5,406.4 440.5,387.6 446.5,405.3 452.5,402.8 458.5,404.5 464.5,478.8 470.5,499.1 476.5,500.6 482.5,550.2 488.5,561.6 494.5,553.8 500.5,544.5 506.5,535.6 512.5,542.6 518.5,533.5 524.5,535.6 530.5,528.8 536.5,521.6 542.5,538.8 548.5,510.2 554.5,496.2 560.5,486.6 566.5,490.2 572.5,481.3 578.5,481.3 584.5,476.6 590.5,485.2 596.5,496.6 602.5,486.6 608.5,462.3 614.5,439.5 620.5,426.8 626.5,426.2 632.5,405.2 638.5,393.1 644.5,392.8 650.5,398.8 656.5,395.6 662.5,399.5 668.5,409.2 674.5,418.4 680.5,393.3 686.5,388.8 692.5,398.5" fill="none" stroke="#0000ff" stroke-width="1" stroke-linejoin="miter" shape-rendering="crispEdges"/>
<g shape-rendering="crispEdges" fill="#555">
<rect x="14" y="567" width="1" height="33"/>
<rect x="98" y="567" width="1" height="28"/>
<rect x="164" y="567" width="1" height="14"/>
<rect x="230" y="567" width="1" height="28"/>
<rect x="296" y="567" width="1" height="28"/>
<rect x="362" y="567" width="1" height="28"/>
<rect x="428" y="567" width="1" height="28"/>
<rect x="494" y="567" width="1" height="14"/>
<rect x="560" y="567" width="1" height="28"/>
<rect x="626" y="567" width="1" height="28"/>
<rect x="692" y="567" width="1" height="19"/>
</g>
<path d="M703 94.5 L708.5 89 H764 V100 H708.5 Z" fill="#1c1c1c"/>
<path d="M703 381.5 L708.5 376 H764 V387 H708.5 Z" fill="#1c1c1c"/>
<path d="M703 398.5 L708.5 393 H764 V404 H708.5 Z" fill="#1a1aff"/>
<path d="M703 414.5 L708.5 409 H764 V420 H708.5 Z" fill="#1c1c1c"/>
<path d="M703 510.5 L708.5 505 H764 V516 H708.5 Z" fill="#1c1c1c"/>
<path d="M14 585 H65 L72 592.5 L65 600 H14 Z" fill="#000"/>
<rect x="692" y="585" width="51" height="15" fill="#000" shape-rendering="crispEdges"/>
<g fill="none" stroke="#000" stroke-width="2.4" stroke-linecap="butt" stroke-linejoin="miter"><polyline points="690.7,40.5 694.5,37.199999999999996 698.3,40.5"/><polyline points="690.7,45.099999999999994 694.5,41.8 698.3,45.099999999999994"/></g>
<g fill="none" stroke="#000" stroke-width="2.4" stroke-linecap="butt" stroke-linejoin="miter"><polyline points="690.7,308.90000000000003 694.5,305.6 698.3,308.90000000000003"/><polyline points="690.7,313.5 694.5,310.2 698.3,313.5"/></g>
<g transform="translate(450.5,43.5)"><circle r="10.3" fill="#e2e2e2" stroke="#cacaca" stroke-width="1.4"/><path d="M-1 -6.3 V6.3 L-8 0 Z M6 -6.3 V6.3 L-1 0 Z" fill="#636363"/></g>
<g transform="translate(475.5,43.5)"><circle r="10.3" fill="#e2e2e2" stroke="#cacaca" stroke-width="1.4"/><path d="M3 -6.3 V6.3 L-5 0 Z" fill="#636363"/></g>
<g transform="translate(500.5,43.5)"><circle r="10.3" fill="#e2e2e2" stroke="#cacaca" stroke-width="1.4"/><path d="M-3 -6.3 V6.3 L5 0 Z" fill="#636363"/></g>
<g transform="translate(525.5,43.5)"><circle r="10.3" fill="#e2e2e2" stroke="#cacaca" stroke-width="1.4"/><path d="M1 -6.3 V6.3 L8 0 Z M-6 -6.3 V6.3 L1 0 Z" fill="#636363"/></g>
<g transform="translate(550.5,43.5)"><circle r="10.3" fill="#e2e2e2" stroke="#cacaca" stroke-width="1.4"/><circle r="6.4" fill="none" stroke="#636363" stroke-width="1"/><path d="M-4 0 H4 M0 -4 V4" stroke="#636363" stroke-width="1.5" fill="none"/></g>
<g transform="translate(575.5,43.5)"><circle r="10.3" fill="#e2e2e2" stroke="#cacaca" stroke-width="1.4"/><circle r="6.4" fill="none" stroke="#636363" stroke-width="1"/><path d="M-4 0 H4" stroke="#636363" stroke-width="1.5" fill="none"/></g>
<g transform="translate(600.5,43.5)"><circle r="10.3" fill="#e2e2e2" stroke="#cacaca" stroke-width="1.4"/><path d="M-7 -6.4 V6.2 M7.1 -6.4 V6.2" stroke="#636363" stroke-width="1.1" fill="none"/><circle cx="1.1" cy="-2.4" r="4" fill="none" stroke="#636363" stroke-width="1.4"/><path d="M-1.8 0.6 L-6 5.2" stroke="#636363" stroke-width="2" fill="none"/></g>
<g transform="translate(625.5,43.5)"><circle r="10.3" fill="#e2e2e2" stroke="#cacaca" stroke-width="1.4"/><path d="M-0.2 -8.5 V8" stroke="#636363" stroke-width="1.2" fill="none"/><path d="M-7.6 -0.7 H-5 M7.4 -0.7 H5" stroke="#636363" stroke-width="1.4"/><path d="M-5.8 -3.5 L-1.7 -0.7 L-5.8 2.1 Z M5.6 -3.5 L1.5 -0.7 L5.6 2.1 Z" fill="#636363"/></g>
<g transform="translate(650.5,43.5)"><circle r="10.3" fill="#e2e2e2" stroke="#cacaca" stroke-width="1.4"/><path d="M0 -8.8 V8.3" stroke="#636363" stroke-width="1.1" fill="none"/><rect x="-1.8" y="-7" width="3.5" height="13" fill="#e4e4e4" stroke="#636363" stroke-width="1.1"/><path d="M-8.5 -0.7 H-6 M8.3 -0.7 H6" stroke="#636363" stroke-width="1.4"/><path d="M-6.9 -3.5 L-3.1 -0.7 L-6.9 2.1 Z M6.8 -3.5 L3 -0.7 L6.8 2.1 Z" fill="#636363"/></g>
<g transform="translate(675.5,43.5)"><circle r="10.3" fill="#e2e2e2" stroke="#cacaca" stroke-width="1.4"/><path d="M-4.5 -6.4 V6.4 L2.7 0 Z" fill="#636363"/><path d="M4 -6.4 V6.4" stroke="#636363" stroke-width="1.1"/></g>
</svg>
<div class="l" style="left:18px;top:33px;color:#1a1a3a;font-size:11px;letter-spacing:-0.17px;">BRV7=ФОРТС(BR-10.17)</div><div class="l" style="left:18px;top:301px;color:#1a1a3a;font-size:11px;letter-spacing:-0.17px;background:#fff;">CCI2(BRV7=ФОРТС)</div><div class="l" style="left:705px;top:131px;color:#1a1a3a;font-size:11px;letter-spacing:-0.25px;">54</div><div class="l" style="left:705px;top:209px;color:#1a1a3a;font-size:11px;letter-spacing:-0.25px;">53</div><div class="l" style="left:705px;top:287px;color:#1a1a3a;font-size:11px;letter-spacing:-0.25px;">52</div><div class="l" style="left:705px;top:359px;color:#1a1a3a;font-size:11px;letter-spacing:-0.25px;">200</div><div class="l" style="left:705px;top:456px;color:#1a1a3a;font-size:11px;letter-spacing:-0.25px;">0</div><div class="l" style="left:705px;top:552px;color:#1a1a3a;font-size:11px;letter-spacing:-0.25px;">-200</div><div class="l" style="left:708.7px;top:88px;color:#fff;font-size:11px;letter-spacing:-0.25px;">54,55</div><div class="l" style="left:708.7px;top:375px;color:#fff;font-size:11px;letter-spacing:-0.25px;">167,9</div><div class="l" style="left:708.7px;top:392px;color:#fff;font-size:11px;letter-spacing:-0.25px;">132,4</div><div class="l" style="left:708.7px;top:408px;color:#fff;font-size:11px;letter-spacing:-0.25px;">100</div><div class="l" style="left:708.7px;top:504px;color:#fff;font-size:11px;letter-spacing:-0.25px;">-100</div><div class="l" style="left:18.5px;top:570px;color:#1a1a3a;font-size:11px;letter-spacing:-0.2px;">12:00</div><div class="l" style="left:102.5px;top:570px;color:#1a1a3a;font-size:11px;letter-spacing:-0.2px;">12:00</div><div class="l" style="left:168.5px;top:570px;color:#1a1a3a;font-size:11px;letter-spacing:-0.2px;">23:00</div><div class="l" style="left:234.5px;top:570px;color:#1a1a3a;font-size:11px;letter-spacing:-0.2px;">20:00</div><div class="l" style="left:300.5px;top:570px;color:#1a1a3a;font-size:11px;letter-spacing:-0.2px;">17:00</div><div class="l" style="left:366.5px;top:570px;color:#1a1a3a;font-size:11px;letter-spacing:-0.2px;">14:00</div><div class="l" style="left:432.5px;top:570px;color:#1a1a3a;font-size:11px;letter-spacing:-0.2px;">11:00</div><div class="l" style="left:498.5px;top:570px;color:#1a1a3a;font-size:11px;letter-spacing:-0.2px;">22:00</div><div class="l" style="left:564.5px;top:570px;color:#1a1a3a;font-size:11px;letter-spacing:-0.2px;">19:00</div><div class="l" style="left:630.5px;top:570px;color:#1a1a3a;font-size:11px;letter-spacing:-0.2px;">16:00</div><div class="l" style="left:696.5px;top:570px;color:#1a1a3a;font-size:11px;letter-spacing:-0.2px;">13:00</div><div class="l" style="left:103px;top:586px;color:#1a1a3a;font-size:11px;">04/09/17</div><div class="l" style="left:235px;top:586px;color:#1a1a3a;font-size:11px;">05/09/17</div><div class="l" style="left:301px;top:586px;color:#1a1a3a;font-size:11px;">06/09/17</div><div class="l" style="left:367px;top:586px;color:#1a1a3a;font-size:11px;">07/09/17</div><div class="l" style="left:433px;top:586px;color:#1a1a3a;font-size:11px;">08/09/17</div><div class="l" style="left:565px;top:586px;color:#1a1a3a;font-size:11px;">11/09/17</div><div class="l" style="left:631px;top:586px;color:#1a1a3a;font-size:11px;">12/09/17</div><div class="l" style="left:19px;top:586px;color:#fff;font-size:11px;">01/09/17</div><div class="l" style="left:696px;top:586px;color:#fff;font-size:11px;">13/09/17</div>
</body></html>
